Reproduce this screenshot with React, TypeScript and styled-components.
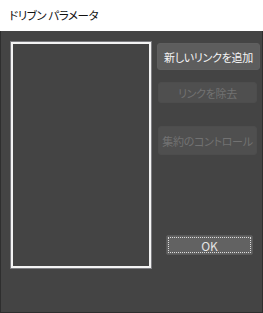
import React from "react";
import styled, { createGlobalStyle } from "styled-components";

const GlobalStyle = createGlobalStyle`
  html, body {
    margin: 0;
    padding: 0;
    background: #444444;
  }
  body {
    font-family: "Noto Sans CJK JP", "Noto Sans", sans-serif;
    font-feature-settings: "palt";
  }
`;

const App = () => {
  return (
    <>
      <GlobalStyle />
      <Window>
        <TitleBar>ドリブン パラメータ</TitleBar>
        <Body>
          <LinkList />
          <Side>
            <Button>新しいリンクを追加</Button>
            <Button disabled $h={21} $top={12} $inset>
              リンクを除去
            </Button>
            <Button disabled $h={29} $top={23} $inset>
              集約のコントロール
            </Button>
            <OkButton>OK</OkButton>
          </Side>
        </Body>
      </Window>
    </>
  );
};

export default App;

const Window = styled.div`
  width: 263px;
  height: 313px;
  box-sizing: border-box;
  display: flex;
  flex-direction: column;
  background: #444444;
  border-left: 1px solid #2e2e2e;
  border-right: 1px solid #2e2e2e;
  border-bottom: 1px solid #2e2e2e;
`;

const TitleBar = styled.div`
  height: 31px;
  flex-shrink: 0;
  background: #ffffff;
  color: #111111;
  font-size: 11.5px;
  line-height: 31px;
  padding-left: 9px;
  margin: 0 -1px;
  letter-spacing: -0.4px;
  white-space: nowrap;
`;

const Body = styled.div`
  flex: 1;
  display: flex;
  padding: 10px 0 0 9px;
  gap: 5px;
`;

const LinkList = styled.div`
  width: 142px;
  height: 228px;
  flex-shrink: 0;
  box-sizing: border-box;
  border: 1px solid #7c7c80;
  box-shadow: inset 0 0 0 2px #f4f4f4;
  background: #444444;
`;

const Side = styled.div`
  display: flex;
  flex-direction: column;
  align-items: flex-start;
  padding-top: 2px;
`;

const Button = styled.button<{ $h?: number; $top?: number; $inset?: boolean }>`
  height: ${(p) => p.$h ?? 27}px;
  width: ${(p) => (p.$inset ? 99 : 103)}px;
  margin-top: ${(p) => p.$top ?? 0}px;
  margin-left: ${(p) => (p.$inset ? 1 : 0)}px;
  padding: 0;
  white-space: nowrap;
  border: 1px solid ${(p) => (p.disabled ? "#4d4d4d" : "#5f5f5f")};
  border-radius: 3px;
  background: ${(p) => (p.disabled ? "#4f4f4f" : "#5d5d5d")};
  color: ${(p) => (p.disabled ? "#727272" : "#f4f4f4")};
  font-family: "Noto Sans CJK JP", "Noto Sans", sans-serif;
  font-feature-settings: "palt";
  font-size: 11px;
  letter-spacing: -0.3px;
`;

const OkButton = styled.button`
  width: 87px;
  height: 20px;
  margin-top: 80px;
  margin-left: 9px;
  padding: 0;
  border: 1px solid #5a5a5a;
  border-radius: 2px;
  background: #626262;
  color: #e4e4e4;
  outline: 1px dotted #dcdcdc;
  outline-offset: -3px;
  font-family: "Noto Sans CJK JP", "Noto Sans", sans-serif;
  font-size: 12px;
`;
